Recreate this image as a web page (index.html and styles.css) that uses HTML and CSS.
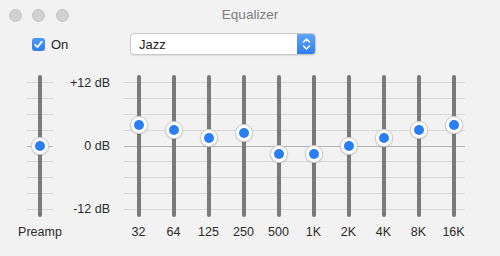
FILE: index.html
```html
<!DOCTYPE html>
<html>
<head>
<meta charset="utf-8">
<link rel="stylesheet" href="styles.css">
</head>
<body>
<div class="window">
  <div class="titlebar">
    <div class="lights"><span class="light"></span><span class="light"></span><span class="light"></span></div>
    <div class="title">Equalizer</div>
    <div></div>
  </div>
  <div class="toolbar">
    <label class="toggle">
      <span class="check"><svg width="13" height="13" viewBox="0 0 13 13"><path d="M3.2 6.8 L5.4 9.2 L9.8 3.6" fill="none" stroke="#fff" stroke-width="1.8" stroke-linecap="round" stroke-linejoin="round"/></svg></span>
      <span class="on">On</span>
    </label>
    <div class="popup">
      <span class="popup-text">Jazz</span>
      <span class="stepper"><svg width="19" height="22" viewBox="0 0 19 22"><path d="M6.5 9 L9.5 6 L12.5 9 M6.5 13 L9.5 16 L12.5 13" fill="none" stroke="#fff" stroke-width="1.5" stroke-linecap="round" stroke-linejoin="round"/></svg></span>
    </div>
  </div>
  <div class="eq">
    <div class="col preamp">
      <div class="slider-area">
        <div class="ticks short"><i></i><i></i><i></i><i></i><i class="zero"></i><i></i><i></i><i></i><i></i></div>
        <div class="slider"><div class="track"></div><div class="knob" style="--db:0"></div></div>
      </div>
      <div class="label">Preamp</div>
    </div>
    <div class="scale"><span>+12 dB</span><span>0 dB</span><span>-12 dB</span></div>
    <div class="bands">
      <div class="slider-area">
        <div class="ticks wide"><i></i><i></i><i></i><i></i><i class="zero"></i><i></i><i></i><i></i><i></i></div>
        <div class="band-row">
          <div class="slider"><div class="track"></div><div class="knob" style="--db:4"></div></div>
          <div class="slider"><div class="track"></div><div class="knob" style="--db:3"></div></div>
          <div class="slider"><div class="track"></div><div class="knob" style="--db:1.5"></div></div>
          <div class="slider"><div class="track"></div><div class="knob" style="--db:2.5"></div></div>
          <div class="slider"><div class="track"></div><div class="knob" style="--db:-1.5"></div></div>
          <div class="slider"><div class="track"></div><div class="knob" style="--db:-1.5"></div></div>
          <div class="slider"><div class="track"></div><div class="knob" style="--db:0"></div></div>
          <div class="slider"><div class="track"></div><div class="knob" style="--db:1.5"></div></div>
          <div class="slider"><div class="track"></div><div class="knob" style="--db:3"></div></div>
          <div class="slider"><div class="track"></div><div class="knob" style="--db:4"></div></div>
        </div>
      </div>
      <div class="band-labels">
        <span>32</span><span>64</span><span>125</span><span>250</span><span>500</span><span>1K</span><span>2K</span><span>4K</span><span>8K</span><span>16K</span>
      </div>
    </div>
  </div>
</div>
</body>
</html>
```

FILE: styles.css
```css
* { box-sizing: border-box; }
html, body { margin: 0; padding: 0; }
body {
  width: 500px;
  height: 256px;
  background: #f2f2f2;
  font-family: "Liberation Sans", Arial, sans-serif;
  color: #2b2b2b;
  overflow: hidden;
}
.window { width: 500px; height: 256px; }

.titlebar {
  height: 28px;
  display: grid;
  grid-template-columns: 1fr auto 1fr;
  align-items: center;
}
.lights { display: flex; gap: 10.5px; padding-left: 8.5px; padding-top: 2px; }
.light {
  width: 13px; height: 13px; border-radius: 50%;
  background: #d1d1d1;
  border: 1px solid #c6c6c6;
}
.title { font-size: 13.5px; color: #7d7d7d; padding-top: 1px; }

.toolbar {
  display: flex;
  align-items: center;
  height: 22px;
  margin-top: 5px;
  padding-left: 32px;
}
.toggle { display: flex; align-items: center; gap: 6px; width: 98px; }
.check {
  width: 13px; height: 13px; border-radius: 3px;
  background: linear-gradient(#4c9af8, #2f7ff0);
  display: block;
}
.check svg { display: block; }
.on { font-size: 13px; color: #222; }
.popup {
  width: 186px; height: 22px;
  display: flex; align-items: center;
  background: #fff;
  border: 1px solid #c9c9c9;
  border-radius: 4px;
  box-shadow: 0 1px 1px rgba(0,0,0,0.08);
  overflow: hidden;
}
.popup-text { flex: 1; font-size: 13px; padding-left: 8px; color: #1e1e1e; }
.stepper {
  width: 19px; height: 22px; margin: -1px -1px -1px 0;
  background: linear-gradient(#62a6fa, #2d7cf0);
  border-radius: 0 4px 4px 0;
}
.stepper svg { display: block; }

.eq { display: flex; margin-top: 20px; }
.col { display: flex; flex-direction: column; align-items: center; }
.preamp { width: 52px; margin-left: 14px; }

.slider-area { display: grid; height: 142px; }
.slider-area > * { grid-area: 1 / 1; }

.ticks {
  display: flex; flex-direction: column; justify-content: space-between;
  padding: 7px 0;
  height: 142px;
}
.ticks i { display: block; height: 1px; background: #d9d9d9; }
.ticks i.zero { background: #b4b4b4; }
.ticks.short { width: 26px; justify-self: center; margin-right: 1px; }
.ticks.wide { width: 341px; margin-left: 3px; }

.slider { position: relative; width: 35px; height: 142px; display: flex; justify-content: center; }
.preamp .slider { width: 52px; }
.track { width: 4px; height: 142px; border-radius: 2px; background: #7a7a7a; }
.knob {
  position: absolute;
  left: 50%;
  top: calc(50% - var(--db) * 5.28px);
  width: 18px; height: 18px;
  transform: translate(-50%, -50%);
  border-radius: 50%;
  background: #fff;
  border: 1px solid #cfcfcf;
  box-shadow: 0 0.5px 1.5px rgba(0,0,0,0.18);
  display: flex; align-items: center; justify-content: center;
}
.knob::after {
  content: "";
  width: 10px; height: 10px; border-radius: 50%;
  background: #2a7ef4;
}

.label, .band-labels span { font-size: 12.5px; line-height: 14px; margin-top: 8px; color: #2b2b2b; }

.scale {
  width: 44px;
  height: 142px;
  display: flex; flex-direction: column; justify-content: space-between;
  align-items: flex-end;
  padding: 1px 0;
  font-size: 12.5px; line-height: 14px;
  color: #2b2b2b;
}

.bands { margin-left: 11px; display: flex; flex-direction: column; }
.band-row { display: flex; }
.band-labels { display: flex; }
.band-labels span { width: 35px; text-align: center; }
```
